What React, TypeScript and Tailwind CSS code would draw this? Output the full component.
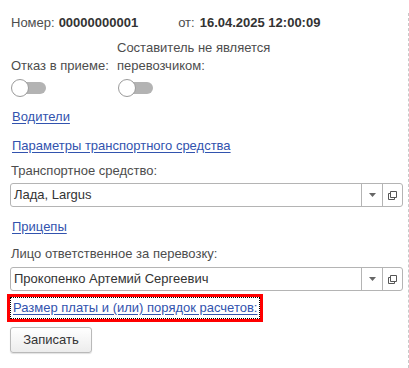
import type { ReactNode } from 'react'

function Toggle() {
  return (
    <div className="relative h-[18px] w-[35px]">
      <div className="absolute left-[8px] top-[3px] h-[12px] w-[27px] rounded-full bg-[#b3b3b3]" />
      <div className="absolute left-0 top-0 h-[18px] w-[18px] rounded-full border border-[#9a9a9a] bg-white" />
    </div>
  )
}

function Link({ children, className = '' }: { children: ReactNode; className?: string }) {
  return (
    <div className={`pl-[12px] leading-[18px] ${className}`}>
      <span className="cursor-pointer text-[#3253ae] underline underline-offset-2">{children}</span>
    </div>
  )
}

function SelectField({ value, className = '' }: { value: string; className?: string }) {
  return (
    <div
      className={`ml-[10px] flex h-[24px] w-[393px] items-stretch rounded-[3px] border border-[#b4b4b4] bg-white ${className}`}
    >
      <div className="flex flex-1 items-center pl-[3px] text-[#333]">{value}</div>
      <div className="flex w-[21px] items-center justify-center border-l border-[#b4b4b4]">
        <svg width="7" height="4" viewBox="0 0 7 4">
          <path d="M0 0h7L3.5 4z" fill="#666" />
        </svg>
      </div>
      <div className="flex w-[20px] items-center justify-center border-l border-[#b4b4b4]">
        <svg width="11" height="11" viewBox="0 0 11 11" fill="none" stroke="#555" strokeWidth="1">
          <path d="M3.5 1.5h6v6h-6z" />
          <path d="M3.5 3.5h-2v6h6v-2" />
        </svg>
      </div>
    </div>
  )
}

export default function App() {
  return (
    <div className="flex h-[368px] w-[409px] bg-white font-['Liberation_Sans',Arial,sans-serif] text-[13px] text-[#4d4d4d]">
      <div className="w-[408px]">
        <div className="flex pl-[11px] pt-[14px] leading-[18px]">
          <span>Номер:</span>
          <span className="ml-[4px] font-bold text-[#333]">00000000001</span>
          <span className="ml-[40px]">от:</span>
          <span className="ml-[5px] font-bold text-[#333]">16.04.2025 12:00:09</span>
        </div>

        <div className="mt-[7px] flex pl-[11px] leading-[18px]">
          <div className="flex w-[106px] flex-col">
            <div className="flex h-[36px] items-end">Отказ в приеме:</div>
            <div className="mt-[4px]">
              <Toggle />
            </div>
          </div>
          <div className="flex flex-col">
            <div className="h-[36px]">
              Составитель не является
              <br />
              перевозчиком:
            </div>
            <div className="mt-[4px] pl-[1px]">
              <Toggle />
            </div>
          </div>
        </div>

        <Link className="mt-[11px]">Водители</Link>
        <Link className="mt-[11px]">Параметры транспортного средства</Link>

        <div className="mt-[7px] pl-[11px] leading-[18px]">Транспортное средство:</div>
        <SelectField value="Лада, Largus" className="mt-[3px]" />

        <Link className="mt-[11px]">Прицепы</Link>

        <div className="mt-[9px] pl-[11px] leading-[18px]">Лицо ответственное за перевозку:</div>
        <SelectField value="Прокопенко Артемий Сергеевич" className="mt-[4px]" />

        <div className="ml-[7px] mt-[3px] h-[28px] w-[256px] border-[3px] border-[#ff0000]">
          <div className="flex h-full items-center border border-dotted border-black pl-[2px] leading-[18px]">
            <span className="text-[#3253ae] underline underline-offset-2">
              Размер платы и (или) порядок расчетов:
            </span>
          </div>
        </div>

        <button className="ml-[10px] mt-[5px] flex h-[26px] w-[82px] items-center justify-center rounded-[3px] border border-[#b9b9b9] bg-gradient-to-b from-white to-[#ececec] text-[#333] shadow-[0_1px_1px_rgba(0,0,0,0.12)]">
          Записать
        </button>
      </div>
      <div className="mt-[13px] h-[355px] border-l border-dashed border-[#c8c8c8]" />
    </div>
  )
}
